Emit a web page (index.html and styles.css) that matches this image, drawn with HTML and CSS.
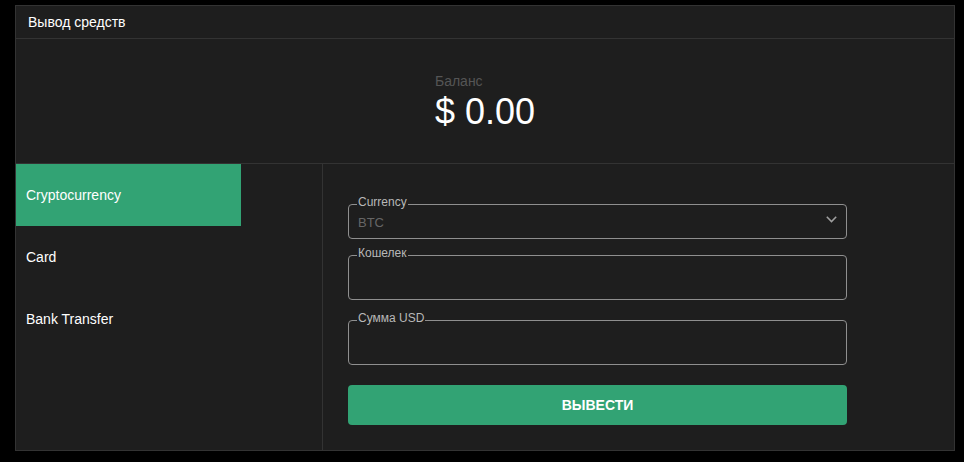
FILE: index.html
```html
<!DOCTYPE html>
<html lang="ru">
<head>
<meta charset="utf-8">
<title>Вывод средств</title>
<link rel="stylesheet" href="styles.css">
</head>
<body>
<div class="card">
  <div class="card-header">Вывод средств</div>
  <div class="balance">
    <div class="balance-inner">
      <div class="balance-label">Баланс</div>
      <div class="balance-value">$ 0.00</div>
    </div>
  </div>
  <div class="body">
    <nav class="tabs">
      <div class="tab active">Cryptocurrency</div>
      <div class="tab">Card</div>
      <div class="tab">Bank Transfer</div>
    </nav>
    <form class="form">
      <fieldset class="field field-select">
        <legend>Currency</legend>
        <div class="select">
          <span class="select-value">BTC</span>
          <svg class="chevron" width="11" height="7" viewBox="0 0 11 7"><polyline points="0.8,0.8 5.5,5.6 10.2,0.8" fill="none" stroke="#a0a0a0" stroke-width="1.5"/></svg>
        </div>
      </fieldset>
      <fieldset class="field field-wallet">
        <legend>Кошелек</legend>
        <input class="input" type="text">
      </fieldset>
      <fieldset class="field field-sum">
        <legend>Сумма USD</legend>
        <input class="input" type="text">
      </fieldset>
      <button class="submit" type="button">ВЫВЕСТИ</button>
    </form>
  </div>
</div>
</body>
</html>
```
FILE: styles.css
```css
html, body {
  margin: 0;
  background: #000;
}
body {
  padding: 5px 10px 0 15px;
  font-family: "Liberation Sans", Arial, sans-serif;
  color: #fff;
}
.card {
  width: 938px;
  background: #1e1e1e;
  border: 1px solid #333;
}
.card-header {
  height: 31px;
  padding: 1px 12px 0;
  line-height: 31px;
  font-size: 14px;
  border-bottom: 1px solid #333;
}
.balance {
  height: 125px;
  box-sizing: border-box;
  padding-top: 34px;
  border-bottom: 1px solid #333;
  display: flex;
  justify-content: center;
}
.balance-label {
  font-size: 14px;
  line-height: 16px;
  color: #555;
}
.balance-value {
  margin-top: 2px;
  font-size: 36px;
  line-height: 41px;
}
.body {
  display: flex;
  height: 286px;
}
.tabs {
  width: 306px;
  border-right: 1px solid #333;
}
.tab {
  width: 225px;
  height: 62px;
  box-sizing: border-box;
  padding-left: 10px;
  display: flex;
  align-items: center;
  font-size: 14px;
}
.tab.active {
  background: #32a374;
}
.form {
  width: 499px;
  padding: 31px 0 0 25px;
}
.field {
  margin: 0;
  padding: 0 9px;
  border: 1px solid #8f8f8f;
  border-radius: 4px;
}
.field legend {
  font-size: 12px;
  line-height: 14px;
  color: #b8b8b8;
  padding: 0 1px 5px;
  margin-left: -1px;
}
.select {
  height: 24px;
  display: flex;
  align-items: flex-start;
  justify-content: space-between;
}
.select-value {
  font-size: 13px;
  line-height: 15px;
  margin-top: 1px;
  color: #666;
}
.chevron {
  margin-top: 2px;
}
.field-wallet {
  margin-top: 7px;
}
.field-sum {
  margin-top: 11px;
}
.input {
  display: block;
  width: 100%;
  height: 34px;
  box-sizing: border-box;
  background: transparent;
  border: 0;
  outline: 0;
  color: #fff;
  font: 13px "Liberation Sans", Arial, sans-serif;
  padding: 0;
}
.submit {
  display: block;
  width: 100%;
  height: 40px;
  margin-top: 20px;
  border: 0;
  border-radius: 4px;
  background: #32a374;
  color: #fff;
  font: bold 14px "Liberation Sans", Arial, sans-serif;
}
```
